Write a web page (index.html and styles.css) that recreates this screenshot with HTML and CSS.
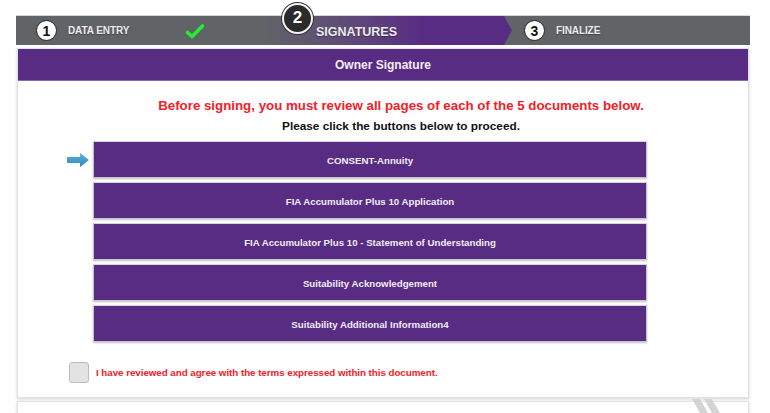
FILE: index.html
```html
<!DOCTYPE html>
<html>
<head>
<meta charset="utf-8">
<link rel="stylesheet" href="styles.css">
</head>
<body>
<div class="page">
  <div class="steps">
    <div class="step step-done">
      <span class="num num-small">1</span>
      <span class="label">DATA ENTRY</span>
      <svg class="check" width="18" height="15" viewBox="0 0 18 15"><path d="M1.5 8.5 L6 12.5 L16.5 2" fill="none" stroke="#22ee33" stroke-width="3.6" stroke-linecap="round" stroke-linejoin="round"/></svg>
    </div>
    <div class="step step-active">
      <span class="num num-big">2</span>
      <span class="label label-big">SIGNATURES</span>
    </div>
    <div class="step step-next">
      <span class="num num-small">3</span>
      <span class="label">FINALIZE</span>
    </div>
  </div>

  <div class="card">
    <div class="card-head">Owner Signature</div>
    <div class="card-body">
      <div class="intro">
        <p class="warn">Before signing, you must review all pages of each of the 5 documents below.</p>
        <p class="hint">Please click the buttons below to proceed.</p>
      </div>
      <div class="docs">
        <div class="doc-row">
          <svg class="pointer" width="22" height="14" viewBox="0 0 22 14"><defs><linearGradient id="ag" x1="0" y1="0" x2="0" y2="1"><stop offset="0" stop-color="#5fb3dc"/><stop offset="1" stop-color="#2f86b8"/></linearGradient></defs><path d="M0 4 H13 V0 L22 7 L13 14 V10 H0 Z" fill="url(#ag)"/></svg>
          <button class="doc">CONSENT-Annuity</button>
        </div>
        <div class="doc-row"><span class="pointer-slot"></span><button class="doc">FIA Accumulator Plus 10 Application</button></div>
        <div class="doc-row"><span class="pointer-slot"></span><button class="doc">FIA Accumulator Plus 10 - Statement of Understanding</button></div>
        <div class="doc-row"><span class="pointer-slot"></span><button class="doc">Suitability Acknowledgement</button></div>
        <div class="doc-row"><span class="pointer-slot"></span><button class="doc">Suitability Additional Information4</button></div>
      </div>
      <label class="agree">
        <span class="box"></span>
        <span class="agree-text">I have reviewed and agree with the terms expressed within this document.</span>
      </label>
    </div>
  </div>
  <div class="card card-next">
    <svg class="stripes" width="40" height="14" viewBox="0 0 40 14"><path d="M4 0 H12 L20 14 H12 Z M16 0 H24 L32 14 H24 Z" fill="#d4d4d4"/></svg>
  </div>
</div>
</body>
</html>
```
FILE: styles.css
```css
* { box-sizing: border-box; }
html, body { margin: 0; padding: 0; background: #fff; }
body { font-family: "Liberation Sans", Arial, sans-serif; overflow: hidden; height: 413px; }

.page { padding: 15px 20px 0 16px; width: 770px; }

.steps {
  display: flex;
  height: 30px;
  background: #606467;
  border-top: 1px solid #d8d8d8;
}
.step { display: flex; align-items: center; position: relative; height: 100%; }
.step-done { width: 246px; padding-left: 20px; }
.step-active { width: 250px; padding-left: 20px; }
.step-active::before {
  content: "";
  position: absolute;
  inset: 0;
  background: linear-gradient(90deg, #606467 0%, #5f4a78 35%, #582c83 65%, #582c83 100%);
  clip-path: polygon(0 0, calc(100% - 8px) 0, 100% 50%, calc(100% - 8px) 100%, 0 100%);
}
.step-next { flex: 1; padding-left: 12px; }

.num {
  display: inline-flex; align-items: center; justify-content: center;
  border-radius: 50%; font-weight: bold; position: relative;
}
.num-small {
  width: 21px; height: 21px; background: #fff; color: #111;
  border: 1.5px solid #222; font-size: 14px; margin-right: 11px;
}
.num-big {
  width: 31px; height: 31px; background: #2b2b2b; color: #fff;
  border: 2px solid #f4f4f4; box-shadow: 0 0 0 1px #333; font-size: 17px;
  margin-top: -25px; margin-right: 3px;
}
.label {
  color: #ececec; font-weight: bold; font-size: 10px; position: relative;
  text-shadow: 0 1px 1px rgba(0,0,0,.35);
  letter-spacing: -0.1px;
}
.label-big { font-size: 12.5px; margin-top: 2px; letter-spacing: 0; }
.check { margin-left: 57px; position: relative; top: 1px; }

.card {
  margin-top: 3px;
  margin-left: 1px;
  width: 732px;
  background: #fff;
  border: 1px solid #e2e2e2;
  box-shadow: 0 1px 3px rgba(0,0,0,.18);
}
.card-head {
  height: 32px; background: #582c83; color: #f2eef6;
  font-weight: bold; font-size: 12px;
  display: flex; align-items: center; justify-content: center;
  border-bottom: 1px solid #8a6aa8;
}
.card-body { padding: 16px 0 14px 0; }
.intro { padding-left: 36px; text-align: center; }
.warn { margin: 0; color: #f2202a; font-weight: bold; font-size: 13.3px; line-height: 17px; }
.hint { margin: 5px 0 0; color: #111; font-weight: bold; font-size: 11.8px; line-height: 14px; }

.docs { display: flex; flex-direction: column; gap: 4px; margin-top: 8px; padding-left: 49px; }
.doc-row { display: flex; align-items: center; gap: 4px; }
.pointer, .pointer-slot { width: 22px; flex: none; }
.doc {
  width: 554px; height: 37px;
  background: #582c83; color: #f0ecf4;
  border: 1px solid #c9c3cf; border-top-color: #d9d5dd;
  box-shadow: 0 1px 2px rgba(0,0,0,.25);
  font-family: "Liberation Sans", Arial, sans-serif;
  font-weight: bold; font-size: 9.7px;
  padding: 2px 0 0; cursor: pointer;
}

.agree { display: flex; align-items: center; margin-top: 20px; padding-left: 51px; gap: 7px; }
.box {
  width: 20px; height: 21px; border-radius: 3px;
  background: #e3e3e3; border: 1px solid #bdbdbd; flex: none;
}
.agree-text { color: #f2202a; font-weight: bold; font-size: 9.8px; letter-spacing: -0.05px; }

.card-next { height: 20px; margin-top: 3px; position: relative; border-bottom: none; }
.stripes { position: absolute; left: 670px; top: -3px; }
```
